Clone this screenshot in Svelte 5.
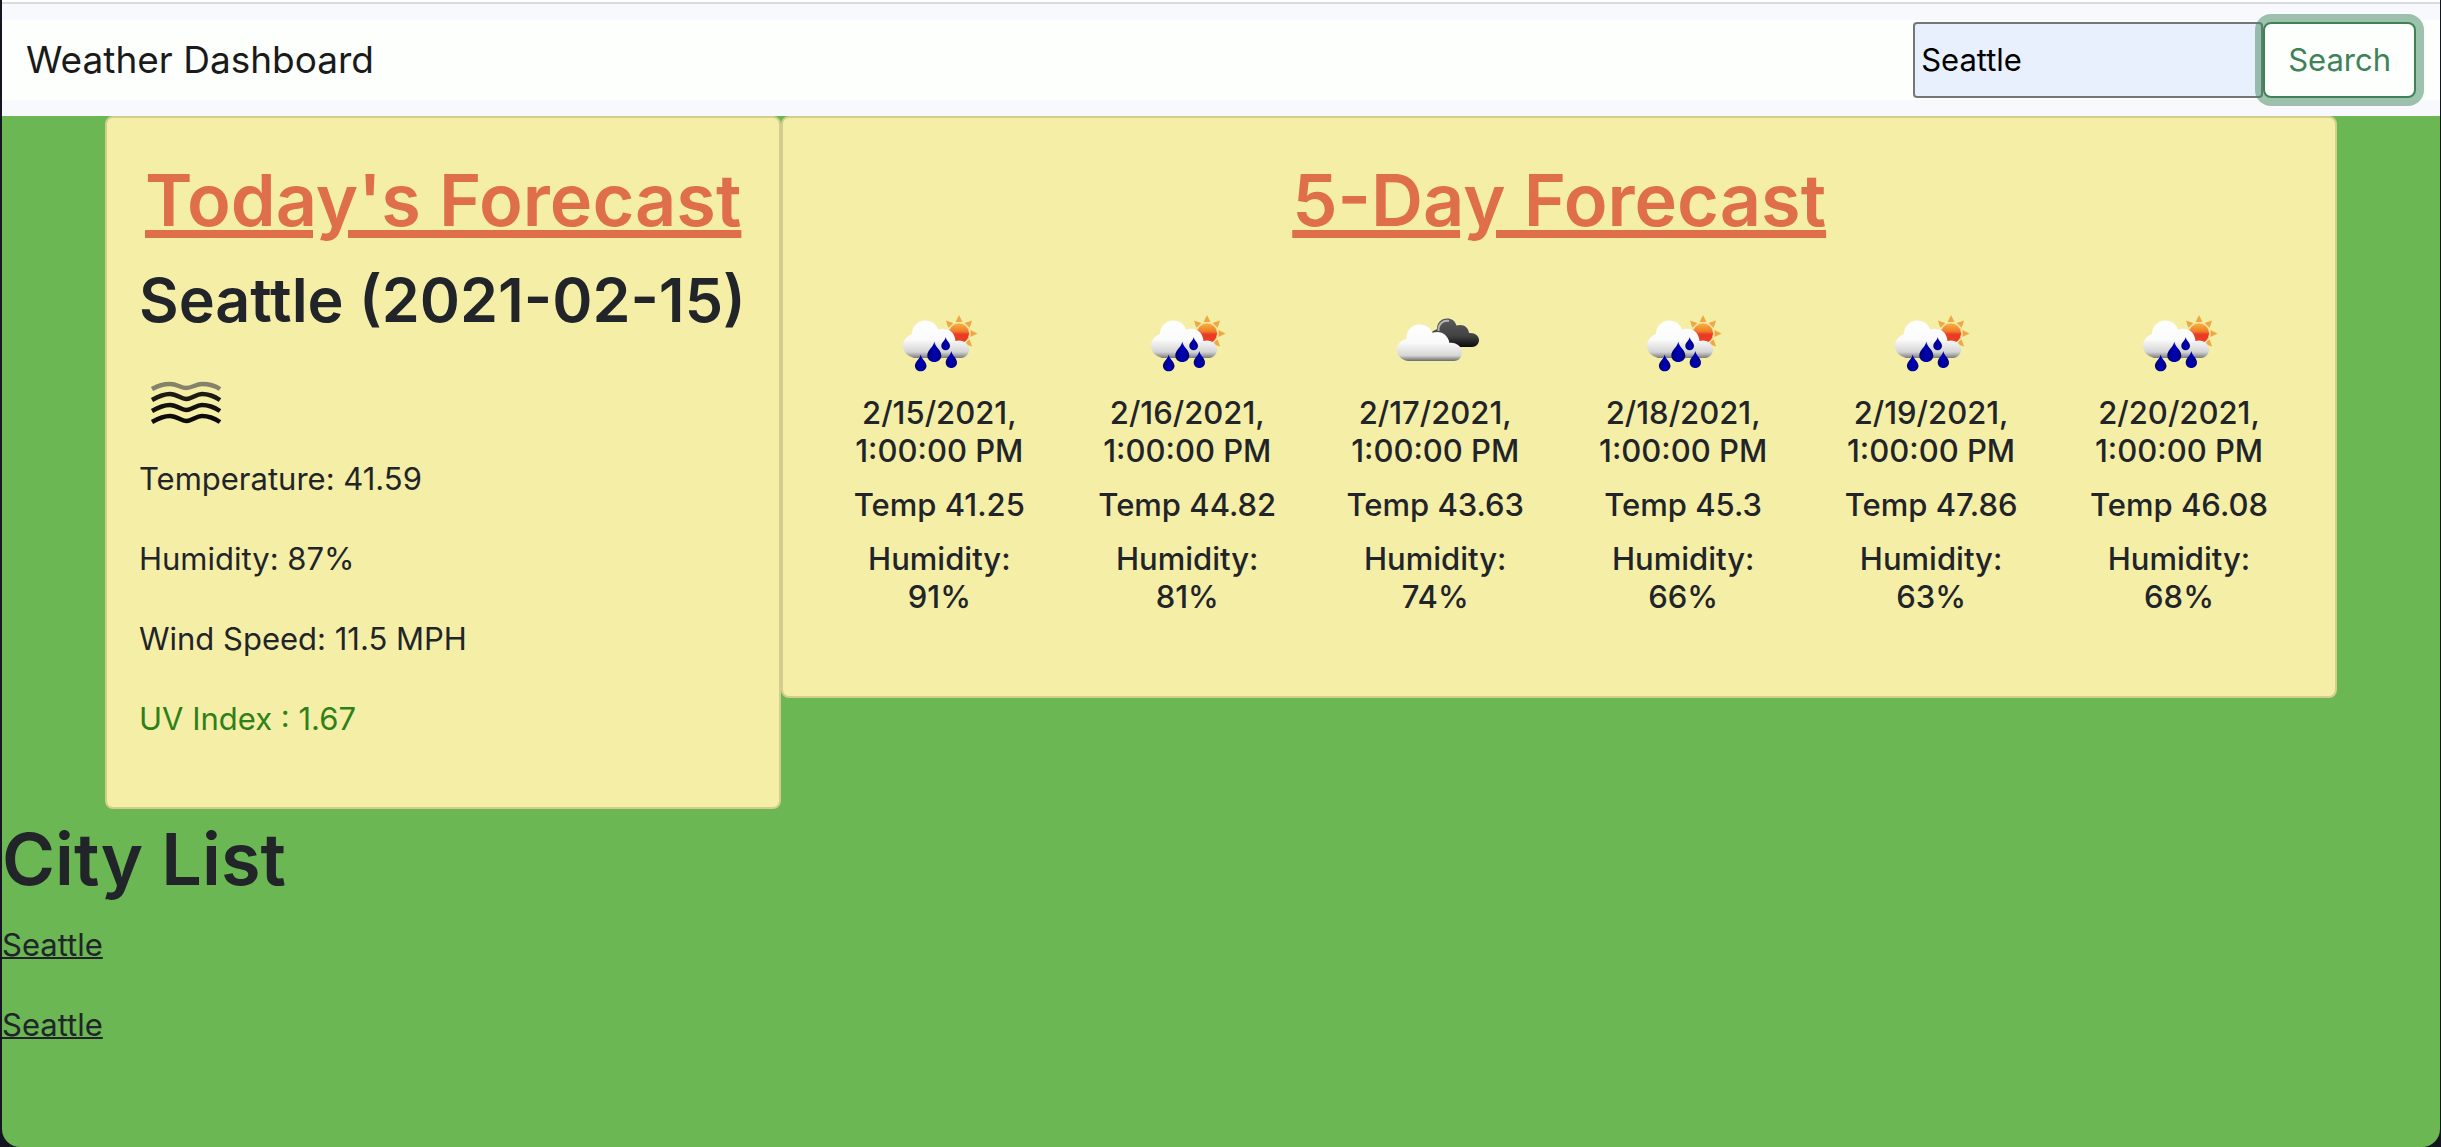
<script>
  let query = $state('Seattle');

  const today = {
    city: 'Seattle',
    date: '2021-02-15',
    temperature: '41.59',
    humidity: '87',
    wind: '11.5',
    uv: '1.67'
  };

  const days = [
    { date: '2/15/2021', icon: 'rain', temp: '41.25', humidity: 91 },
    { date: '2/16/2021', icon: 'rain', temp: '44.82', humidity: 81 },
    { date: '2/17/2021', icon: 'clouds', temp: '43.63', humidity: 74 },
    { date: '2/18/2021', icon: 'rain', temp: '45.3', humidity: 66 },
    { date: '2/19/2021', icon: 'rain', temp: '47.86', humidity: 63 },
    { date: '2/20/2021', icon: 'rain', temp: '46.08', humidity: 68 }
  ];

  const cities = ['Seattle', 'Seattle'];
  const rays = [0, 45, 90, 135, 180, 225, 270, 315];
</script>

{#snippet mist()}
  <svg class="icon" viewBox="0 0 100 100" role="img" aria-label="Mist">
    <g fill="none" stroke-width="4.5">
      <path stroke="#85816a" d="M13 34C20 30 25 29 31 29C38 29 42 33 47 33C53 33 57 29 63 29C69 29 75 30 81 34" />
      <path stroke="#1c1a12" d="M13 45C20 41 25 39 31 39C38 39 42 44 47 44C53 44 57 39 63 39C69 39 75 41 81 45" />
      <path stroke="#12110c" d="M13 56C20 52 25 50 31 50C38 50 42 55 47 55C53 55 57 50 63 50C69 50 75 52 81 56" />
      <path stroke="#0c0b08" d="M13 67C20 63 25 61 31 61C38 61 42 66 47 66C53 66 57 61 63 61C69 61 75 63 81 67" />
    </g>
  </svg>
{/snippet}

{#snippet rain(id)}
  <svg class="icon" viewBox="0 0 100 100" role="img" aria-label="Rain">
    <defs>
      <linearGradient id="sun-{id}" x1="0" y1="0" x2="0" y2="1">
        <stop offset="0.1" stop-color="#f6a83a" />
        <stop offset="0.4" stop-color="#f07a2c" />
        <stop offset="0.55" stop-color="#ea3a22" />
        <stop offset="1" stop-color="#ea3f26" />
      </linearGradient>
      <linearGradient id="cloud-{id}" gradientUnits="userSpaceOnUse" x1="0" y1="26" x2="0" y2="65">
        <stop offset="0" stop-color="#fff" />
        <stop offset="0.5" stop-color="#fbfbfb" />
        <stop offset="0.82" stop-color="#d4d4d4" />
        <stop offset="1" stop-color="#6d6d6d" />
      </linearGradient>
      <linearGradient id="drop-{id}" x1="0" y1="0" x2="1" y2="0">
        <stop offset="0" stop-color="#000070" />
        <stop offset="0.5" stop-color="#0000b8" />
        <stop offset="1" stop-color="#000078" />
      </linearGradient>
    </defs>
    <g fill="#eea945">
      {#each rays as angle}
        <path d="M66.5 28L70 21L73.5 28Z" transform="rotate({angle} 70 39.5)" />
      {/each}
    </g>
    <circle cx="70" cy="39.5" r="10.5" fill="url(#sun-{id})" stroke="#f7dc9c" stroke-width="1" />
    <path
      fill="url(#cloud-{id})"
      d="M25 64C18 62 14 57 14 52C14 46 18 42 23 40C23 32 29 26.5 36 26.5C43 26.5 47 30 49 35.5C57 33 66 37 66.5 47C73 45 80 49 80 55C80 60 77 63 73 64Z"
    />
    <g fill="url(#drop-{id})">
      <path d="M45.3 47.5C46 53 52.3 56 52.3 61.5C52.3 65.5 49 68 45.3 68C41.5 68 38.3 65.5 38.3 61.5C38.3 56 44.6 53 45.3 47.5Z" />
      <path d="M56.7 43C57.2 46.5 61 48.5 61 52C61 54.5 59 56.2 56.7 56.2C54.3 56.2 52.3 54.5 52.3 52C52.3 48.5 56.2 46.5 56.7 43Z" />
      <path d="M62.3 57C63 61.5 68 64 68 68.5C68 71.8 65.3 74 62.3 74C59.3 74 56.7 71.8 56.7 68.5C56.7 64 61.7 61.5 62.3 57Z" />
      <path d="M31.7 60.5C32.3 65 37.5 67.5 37.5 72C37.5 75 34.7 77.3 31.7 77.3C28.7 77.3 25.9 75 25.9 72C25.9 67.5 31.1 65 31.7 60.5Z" />
    </g>
  </svg>
{/snippet}

{#snippet clouds(id)}
  <svg class="icon" viewBox="0 0 100 100" role="img" aria-label="Broken clouds">
    <defs>
      <linearGradient id="back-{id}" x1="0" y1="0" x2="0" y2="1">
        <stop offset="0" stop-color="#5a5a5a" />
        <stop offset="0.6" stop-color="#434343" />
        <stop offset="1" stop-color="#0c0c0c" />
      </linearGradient>
      <linearGradient id="front-{id}" x1="0" y1="0" x2="0" y2="1">
        <stop offset="0" stop-color="#fff" />
        <stop offset="0.5" stop-color="#fafafa" />
        <stop offset="0.85" stop-color="#d6d6d6" />
        <stop offset="1" stop-color="#6b6b6b" />
      </linearGradient>
    </defs>
    <path
      fill="url(#back-{id})"
      d="M47 38C49 36 51 36 52 35C52 29 56 24.5 62 24.5C67 24.5 70 27 71.5 31.5C78 29.5 83.5 33 84 39C90 38.5 94 42 94 46C94 50 91 53 87 53L60 53Z"
    />
    <path fill="none" stroke="#b4b4b4" stroke-width="2" d="M53.5 37C53 30 58 26 64 27" />
    <path
      fill="url(#front-{id})"
      d="M23 67C16 66 12 61 12 56C12 50 16 46 21.5 45C21 36 27 30.5 34.5 30.5C41 30.5 46 34 47 39C56 36 63 41 64.5 49C71 48 77 53 77 58C77 63 74 67 69 67Z"
    />
  </svg>
{/snippet}

<div class="window">
  <nav class="navbar">
    <div class="nav-inner">
      <a class="brand" href="#home">Weather Dashboard</a>
      <form class="search" onsubmit={(event) => event.preventDefault()}>
        <input type="text" aria-label="City" bind:value={query} />
        <button type="submit">Search</button>
      </form>
    </div>
  </nav>

  <main>
    <div class="cards">
      <section class="card">
        <h1>Today's Forecast</h1>
        <h2>{today.city} ({today.date})</h2>
        {@render mist()}
        <p>Temperature: {today.temperature}</p>
        <p>Humidity: {today.humidity}%</p>
        <p>Wind Speed: {today.wind} MPH</p>
        <p class="uv">UV Index : {today.uv}</p>
      </section>

      <section class="card">
        <h1>5-Day Forecast</h1>
        <div class="days">
          {#each days as day, i}
            <article class="day">
              {#if day.icon === 'rain'}
                {@render rain(i)}
              {:else}
                {@render clouds(i)}
              {/if}
              <h6>{day.date}, 1:00:00 PM</h6>
              <h6>Temp {day.temp}</h6>
              <h6>Humidity: {day.humidity}%</h6>
            </article>
          {/each}
        </div>
      </section>
    </div>

    <section class="cities">
      <h1>City List</h1>
      {#each cities as city}
        <p><a href="#city">{city}</a></p>
      {/each}
    </section>
  </main>
</div>

<style>
  :global(body) {
    background: #14161f;
  }

  .window {
    box-sizing: border-box;
    min-height: 100vh;
    margin: 0 1px 0 2px;
    border-radius: 0 0 18px 18px;
    overflow: hidden;
    background: #6bb753;
    color: #212529;
    font-family: Inter, 'Liberation Sans', sans-serif;
    font-size: 31px;
    line-height: 48px;
  }

  .navbar {
    padding: 16px 0;
    border-top: 2px solid #d9dbe0;
    box-shadow: 0 -2px #fff;
    margin-top: 2px;
    background: #f8f9fc;
  }

  .nav-inner {
    display: flex;
    align-items: center;
    justify-content: space-between;
    height: 80px;
    padding: 0 24px;
    background: #fdfffc;
  }

  .brand {
    color: #1a1a1a;
    font-size: 37px;
    line-height: 60px;
    text-decoration: none;
  }

  .search {
    display: flex;
  }

  .search input {
    box-sizing: border-box;
    width: 350px;
    padding: 2px 6px;
    border: 2px solid #767676;
    border-radius: 4px;
    background: #e8f0fe;
    color: #000;
    font: inherit;
  }

  .search button {
    position: relative;
    padding: 12px 23px;
    border: 2px solid #3f8259;
    border-radius: 8px;
    background: #fdfffc;
    box-shadow: 0 0 0 8px rgba(63, 135, 91, 0.5);
    color: #3f8259;
    font: inherit;
  }

  .cards {
    display: grid;
    grid-template-columns: 10fr 23fr;
    align-items: start;
    padding: 0 103px;
  }

  .card {
    padding: 32px;
    border: 2px solid #d3cd90;
    border-radius: 8px;
    background: #f5eea6;
  }

  h1 {
    margin: 0 0 12px;
    font-size: 72px;
    font-weight: 600;
    line-height: 100px;
  }

  h2 {
    margin: 0 0 16px;
    font-size: 61px;
    font-weight: 600;
    line-height: 77px;
    white-space: nowrap;
  }

  h6 {
    margin: 0 0 16px;
    font-size: 31px;
    font-weight: 500;
    line-height: 38px;
  }

  .card h1 {
    color: #df6e4c;
    text-align: center;
    text-decoration: underline;
    text-decoration-thickness: 8px;
    text-underline-offset: 4px;
    white-space: nowrap;
  }

  p {
    margin: 0 0 32px;
  }

  .uv {
    color: #2f8019;
  }

  .icon {
    display: block;
    width: 100px;
    height: 100px;
  }

  .days {
    display: grid;
    grid-template-columns: repeat(6, 1fr);
  }

  .day {
    padding: 32px;
    text-align: center;
  }

  .day .icon {
    margin: 0 auto;
  }

  .cities a {
    color: inherit;
    text-decoration-thickness: 2px;
  }
</style>
